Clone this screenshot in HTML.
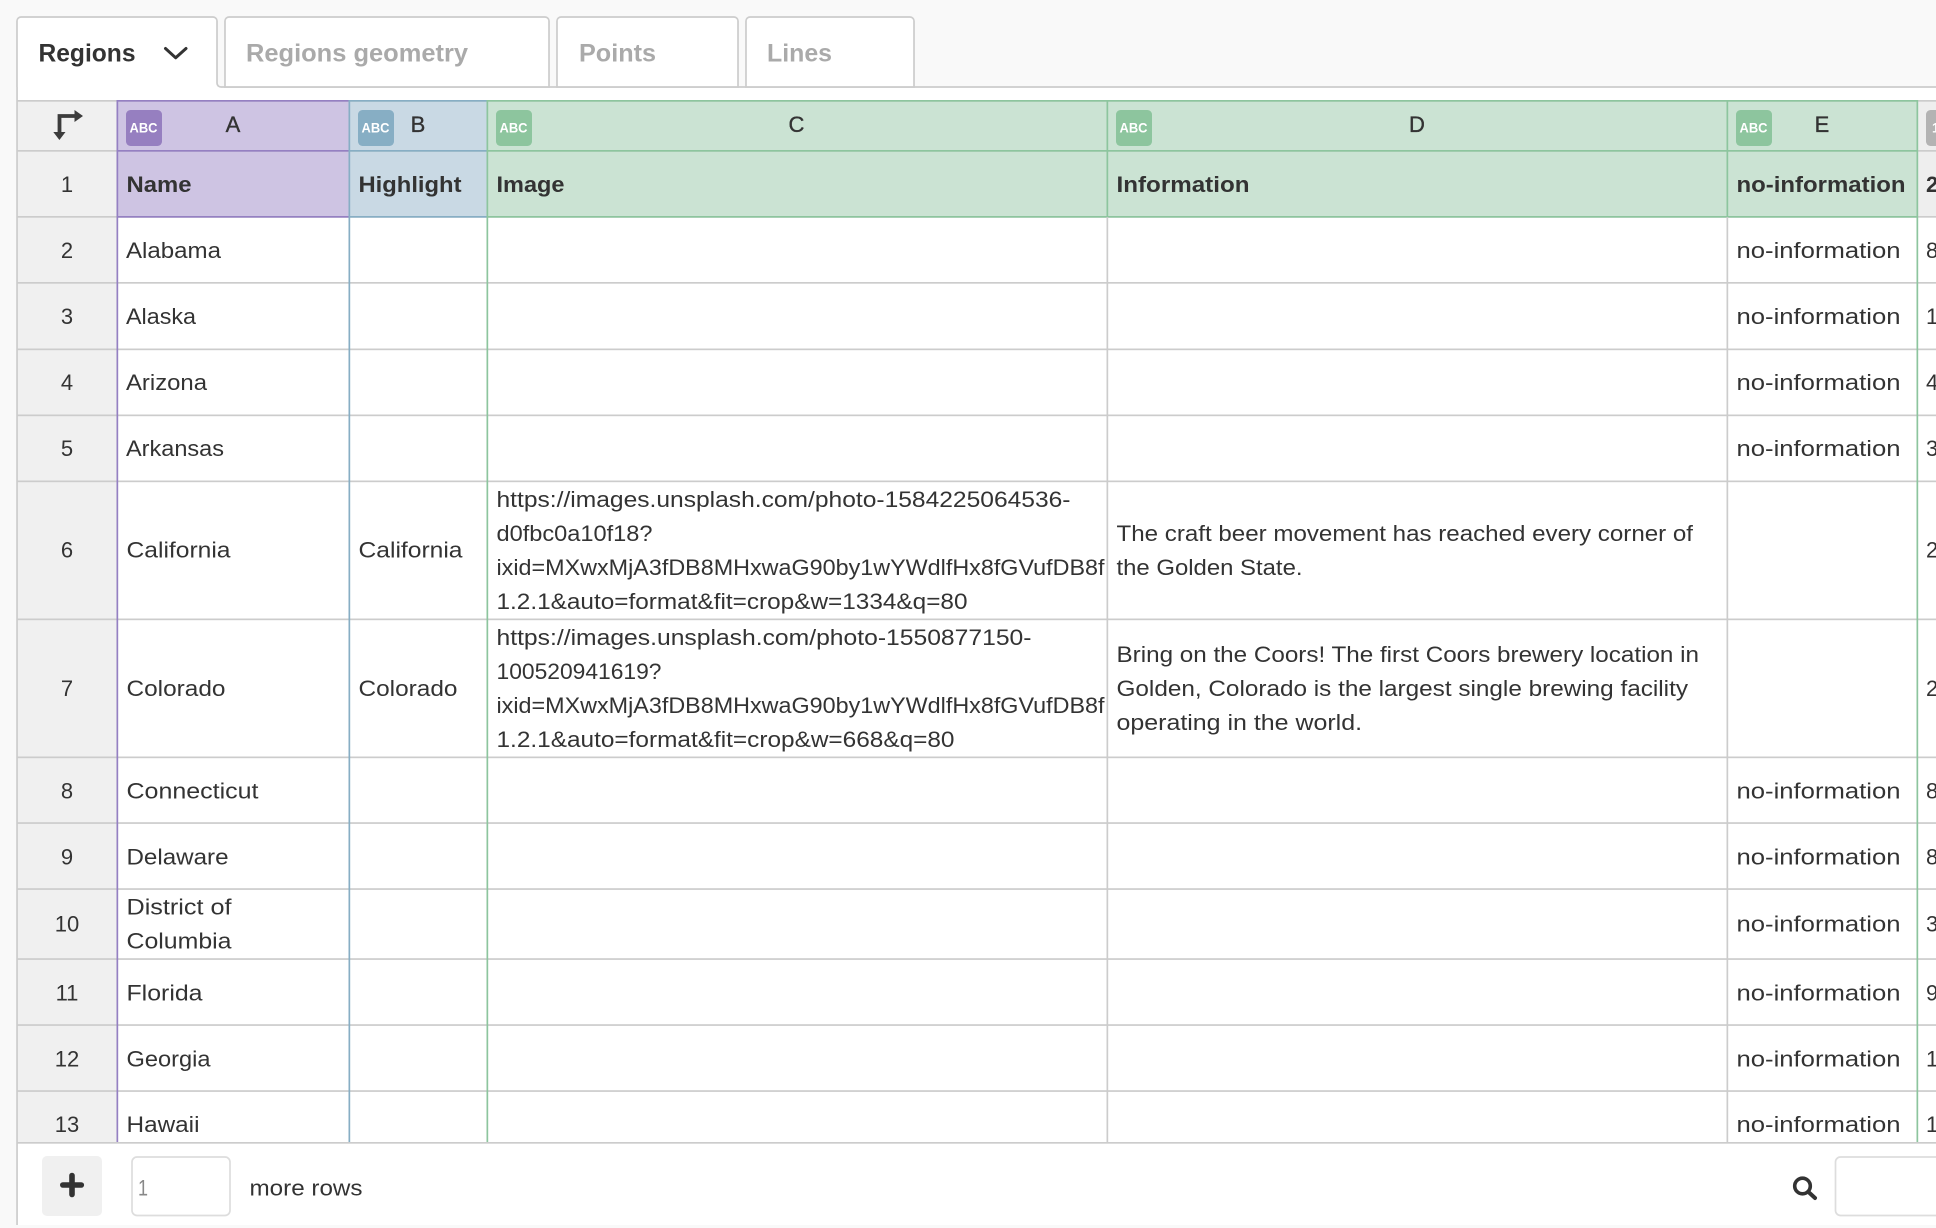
<!DOCTYPE html>
<html><head><meta charset="utf-8"><title>Regions</title>
<style>
html,body{margin:0;padding:0;background:#f9f9f9;overflow:hidden;width:1936px;height:1228px}
svg{display:block}
text{font-family:"Liberation Sans",Arial,sans-serif;font-size:22px;fill:#333;transform:translateY(-.5px)}
.b{font-weight:700}
.n{text-anchor:middle}
.l{stroke:#333;stroke-width:.35px}
.abc{font-size:13.5px;font-weight:700;fill:#fff}
.tab{font-size:25px;font-weight:700}
.off{fill:#aaa}
</style></head><body>
<svg width="1936" height="1228" viewBox="0 0 1936 1228" xmlns="http://www.w3.org/2000/svg">
<rect width="1936" height="1228" fill="#f9f9f9"/>
<!-- main white panel -->
<rect x="17" y="87" width="1919" height="1138" fill="#fff"/>
<!-- tabs -->
<path d="M17 87V21a4 4 0 0 1 4-4H213a4 4 0 0 1 4 4V87Z" fill="#fff"/>
<path d="M17 87V21a4 4 0 0 1 4-4H213a4 4 0 0 1 4 4V83a4 4 0 0 0 4 4H1936" fill="none" stroke="#ccc" stroke-width="1.7"/>
<path d="M225 87V21a4 4 0 0 1 4-4H545a4 4 0 0 1 4 4V87Z" fill="#fff" stroke="#ccc" stroke-width="1.7"/>
<path d="M557 87V21a4 4 0 0 1 4-4H734a4 4 0 0 1 4 4V87Z" fill="#fff" stroke="#ccc" stroke-width="1.7"/>
<path d="M746 87V21a4 4 0 0 1 4-4H910a4 4 0 0 1 4 4V87Z" fill="#fff" stroke="#ccc" stroke-width="1.7"/>
<text class="tab" x="38.500" y="62" textLength="97" lengthAdjust="spacingAndGlyphs">Regions</text>
<path d="M165.500 48.500 175.700 57.800 186 48.500" fill="none" stroke="#333" stroke-width="3" stroke-linecap="round" stroke-linejoin="round"/>
<text class="tab off" x="246" y="62" textLength="222" lengthAdjust="spacingAndGlyphs">Regions geometry</text>
<text class="tab off" x="579" y="62" textLength="77" lengthAdjust="spacingAndGlyphs">Points</text>
<text class="tab off" x="767" y="62" textLength="65" lengthAdjust="spacingAndGlyphs">Lines</text>

<!-- header fills -->
<rect x="17" y="101" width="100" height="1042" fill="#f0f0f0"/>
<rect x="117" y="101" width="232" height="116" fill="#cec4e3"/>
<rect x="349" y="101" width="138" height="116" fill="#c9d9e4"/>
<rect x="487" y="101" width="1430" height="116" fill="#cbe3d3"/>
<rect x="1917" y="101" width="19" height="116" fill="#eee"/>

<!-- horizontal lines -->
<g fill="#ccc">
<rect x="17" y="100" width="1919" height="1.7"/>
<rect x="17" y="150" width="1919" height="1.7"/>
<rect x="17" y="216" width="1919" height="1.7"/>
<rect x="17" y="282" width="1919" height="1.7"/>
<rect x="17" y="348.500" width="1919" height="1.7"/>
<rect x="17" y="414.500" width="1919" height="1.7"/>
<rect x="17" y="480.500" width="1919" height="1.7"/>
<rect x="17" y="618.500" width="1919" height="1.7"/>
<rect x="17" y="756.500" width="1919" height="1.7"/>
<rect x="17" y="822.200" width="1919" height="1.7"/>
<rect x="17" y="888.200" width="1919" height="1.7"/>
<rect x="17" y="958.200" width="1919" height="1.7"/>
<rect x="17" y="1024.200" width="1919" height="1.7"/>
<rect x="17" y="1090.200" width="1919" height="1.7"/>
<rect x="17" y="1142" width="1919" height="1.7"/>
</g>
<!-- coloured header lines -->
<rect x="117" y="100" width="232" height="1.7" fill="#9580c2"/>
<rect x="117" y="150" width="232" height="1.7" fill="#9580c2"/>
<rect x="117" y="216" width="232" height="1.7" fill="#9580c2"/>
<rect x="349" y="100" width="138" height="1.7" fill="#87aec4"/>
<rect x="349" y="150" width="138" height="1.7" fill="#87aec4"/>
<rect x="349" y="216" width="138" height="1.7" fill="#87aec4"/>
<rect x="487" y="100" width="1430" height="1.7" fill="#8dc59e"/>
<rect x="487" y="150" width="1430" height="1.7" fill="#8dc59e"/>
<rect x="487" y="216" width="1430" height="1.7" fill="#8dc59e"/>
<!-- vertical lines -->
<rect x="1106.500" y="217" width="1.7" height="925" fill="#ccc"/>
<rect x="1726.500" y="217" width="1.7" height="925" fill="#ccc"/>
<rect x="1106.500" y="100" width="1.7" height="117" fill="#8dc59e"/>
<rect x="1726.500" y="100" width="1.7" height="117" fill="#8dc59e"/>
<rect x="116.500" y="100" width="1.7" height="1042" fill="#9580c2"/>
<rect x="348.500" y="100" width="1.7" height="1042" fill="#87aec4"/>
<rect x="486.500" y="100" width="1.7" height="1042" fill="#8dc59e"/>
<rect x="1916.500" y="100" width="1.7" height="1042" fill="#8dc59e"/>
<!-- left edge -->
<rect x="16.200" y="87" width="1.7" height="1138" fill="#ccc"/>

<!-- corner icon -->
<path d="M59.500 133V116H75" fill="none" stroke="#3c3c3c" stroke-width="3.800"/>
<path d="M74.500 110 83 116 74.500 122ZM53.300 132H65.500L59.400 140Z" fill="#3c3c3c"/>

<!-- badges -->
<rect x="126" y="110" width="36" height="36" rx="4.500" fill="#967fc0"/>
<rect x="358" y="110" width="36" height="36" rx="4.500" fill="#87aec4"/>
<rect x="496" y="110" width="36" height="36" rx="4.500" fill="#8dc59e"/>
<rect x="1116" y="110" width="36" height="36" rx="4.500" fill="#8dc59e"/>
<rect x="1736" y="110" width="36" height="36" rx="4.500" fill="#8dc59e"/>
<rect x="1926" y="110" width="36" height="36" rx="4.500" fill="#b3b3b3"/>
<text class="abc" x="129.500" y="133" textLength="28" lengthAdjust="spacingAndGlyphs">ABC</text>
<text class="abc" x="361.500" y="133" textLength="28" lengthAdjust="spacingAndGlyphs">ABC</text>
<text class="abc" x="499.500" y="133" textLength="28" lengthAdjust="spacingAndGlyphs">ABC</text>
<text class="abc" x="1119.500" y="133" textLength="28" lengthAdjust="spacingAndGlyphs">ABC</text>
<text class="abc" x="1739.500" y="133" textLength="28" lengthAdjust="spacingAndGlyphs">ABC</text>
<text class="abc" x="1932" y="133">1</text>

<!-- column letters -->
<text class="n l" x="233" y="132.500">A</text>
<text class="n l" x="418" y="132.500">B</text>
<text class="n l" x="796.500" y="132.500">C</text>
<text class="n l" x="1417" y="132.500">D</text>
<text class="n l" x="1822" y="132.500">E</text>

<!-- row numbers -->
<text class="n" x="67" y="192.500">1</text>
<text class="n" x="67" y="258.500">2</text>
<text class="n" x="67" y="324.500">3</text>
<text class="n" x="67" y="390.500">4</text>
<text class="n" x="67" y="456.500">5</text>
<text class="n" x="67" y="558">6</text>
<text class="n" x="67" y="696.500">7</text>
<text class="n" x="67" y="799">8</text>
<text class="n" x="67" y="865">9</text>
<text class="n" x="67" y="932">10</text>
<text class="n" x="67" y="1001">11</text>
<text class="n" x="67" y="1067">12</text>
<text class="n" x="67" y="1132.500">13</text>

<!-- header titles -->
<text class="b" x="126.500" y="192.500" textLength="65" lengthAdjust="spacingAndGlyphs">Name</text>
<text class="b" x="358.500" y="192.500" textLength="103" lengthAdjust="spacingAndGlyphs">Highlight</text>
<text class="b" x="496.500" y="192.500" textLength="68" lengthAdjust="spacingAndGlyphs">Image</text>
<text class="b" x="1116.500" y="192.500" textLength="133" lengthAdjust="spacingAndGlyphs">Information</text>
<text class="b" x="1736.500" y="192.500" textLength="169" lengthAdjust="spacingAndGlyphs">no-information</text>
<text class="b" x="1926" y="192.500">2</text>

<!-- column A -->
<text x="126" y="258.500" textLength="95" lengthAdjust="spacingAndGlyphs">Alabama</text>
<text x="126" y="324.500" textLength="70" lengthAdjust="spacingAndGlyphs">Alaska</text>
<text x="126" y="390.500" textLength="81" lengthAdjust="spacingAndGlyphs">Arizona</text>
<text x="126" y="456.500" textLength="98" lengthAdjust="spacingAndGlyphs">Arkansas</text>
<text x="126.500" y="558" textLength="104" lengthAdjust="spacingAndGlyphs">California</text>
<text x="126.500" y="696.500" textLength="99" lengthAdjust="spacingAndGlyphs">Colorado</text>
<text x="126.500" y="799" textLength="132" lengthAdjust="spacingAndGlyphs">Connecticut</text>
<text x="126.500" y="865" textLength="102" lengthAdjust="spacingAndGlyphs">Delaware</text>
<text x="126.500" y="915" textLength="105" lengthAdjust="spacingAndGlyphs">District of</text>
<text x="126.500" y="949" textLength="105" lengthAdjust="spacingAndGlyphs">Columbia</text>
<text x="126.500" y="1001" textLength="76" lengthAdjust="spacingAndGlyphs">Florida</text>
<text x="126.500" y="1067" textLength="84" lengthAdjust="spacingAndGlyphs">Georgia</text>
<text x="126.500" y="1132.500" textLength="73" lengthAdjust="spacingAndGlyphs">Hawaii</text>

<!-- column B -->
<text x="358.500" y="558" textLength="104" lengthAdjust="spacingAndGlyphs">California</text>
<text x="358.500" y="696.500" textLength="99" lengthAdjust="spacingAndGlyphs">Colorado</text>

<!-- column C -->
<text x="496.500" y="507.500" textLength="574" lengthAdjust="spacingAndGlyphs">https://images.unsplash.com/photo-1584225064536-</text>
<text x="496.500" y="541.500" textLength="156" lengthAdjust="spacingAndGlyphs">d0fbc0a10f18?</text>
<text x="496.500" y="575.500" textLength="608" lengthAdjust="spacingAndGlyphs">ixid=MXwxMjA3fDB8MHxwaG90by1wYWdlfHx8fGVufDB8f</text>
<text x="496.500" y="609.500" textLength="471" lengthAdjust="spacingAndGlyphs">1.2.1&amp;auto=format&amp;fit=crop&amp;w=1334&amp;q=80</text>
<text x="496.500" y="645.500" textLength="535" lengthAdjust="spacingAndGlyphs">https://images.unsplash.com/photo-1550877150-</text>
<text x="496.500" y="679.500" textLength="165" lengthAdjust="spacingAndGlyphs">100520941619?</text>
<text x="496.500" y="713.500" textLength="608" lengthAdjust="spacingAndGlyphs">ixid=MXwxMjA3fDB8MHxwaG90by1wYWdlfHx8fGVufDB8f</text>
<text x="496.500" y="747.500" textLength="458" lengthAdjust="spacingAndGlyphs">1.2.1&amp;auto=format&amp;fit=crop&amp;w=668&amp;q=80</text>

<!-- column D -->
<text x="1116.500" y="541.500" textLength="576.500" lengthAdjust="spacingAndGlyphs">The craft beer movement has reached every corner of</text>
<text x="1116.500" y="575.500" textLength="186" lengthAdjust="spacingAndGlyphs">the Golden State.</text>
<text x="1116.500" y="662.500" textLength="582.500" lengthAdjust="spacingAndGlyphs">Bring on the Coors! The first Coors brewery location in</text>
<text x="1116.500" y="696.500" textLength="571.500" lengthAdjust="spacingAndGlyphs">Golden, Colorado is the largest single brewing facility</text>
<text x="1116.500" y="730.500" textLength="245.500" lengthAdjust="spacingAndGlyphs">operating in the world.</text>

<!-- column E -->
<text x="1736.500" y="258.500" textLength="164" lengthAdjust="spacingAndGlyphs">no-information</text>
<text x="1736.500" y="324.500" textLength="164" lengthAdjust="spacingAndGlyphs">no-information</text>
<text x="1736.500" y="390.500" textLength="164" lengthAdjust="spacingAndGlyphs">no-information</text>
<text x="1736.500" y="456.500" textLength="164" lengthAdjust="spacingAndGlyphs">no-information</text>
<text x="1736.500" y="799" textLength="164" lengthAdjust="spacingAndGlyphs">no-information</text>
<text x="1736.500" y="865" textLength="164" lengthAdjust="spacingAndGlyphs">no-information</text>
<text x="1736.500" y="932" textLength="164" lengthAdjust="spacingAndGlyphs">no-information</text>
<text x="1736.500" y="1001" textLength="164" lengthAdjust="spacingAndGlyphs">no-information</text>
<text x="1736.500" y="1067" textLength="164" lengthAdjust="spacingAndGlyphs">no-information</text>
<text x="1736.500" y="1132.500" textLength="164" lengthAdjust="spacingAndGlyphs">no-information</text>

<!-- column F -->
<text x="1926" y="258.500">8</text>
<text x="1926" y="324.500">1</text>
<text x="1926" y="390.500">4</text>
<text x="1926" y="456.500">3</text>
<text x="1926" y="558">2</text>
<text x="1926" y="696.500">2</text>
<text x="1926" y="799">8</text>
<text x="1926" y="865">8</text>
<text x="1926" y="932">3</text>
<text x="1926" y="1001">9</text>
<text x="1926" y="1067">1</text>
<text x="1926" y="1132.500">1</text>

<!-- footer -->
<rect x="18" y="1143" width="1918" height="82" fill="#fff"/>
<rect x="17" y="1142" width="1919" height="1.7" fill="#ccc"/>
<rect x="42" y="1156" width="60" height="60" rx="5" fill="#f0f0f0"/>
<path d="M62.800 1185H81.300M72 1175.500V1194.500" stroke="#333" stroke-width="5.600" stroke-linecap="round"/>
<rect x="132" y="1157" width="98" height="58.500" rx="5" fill="#fff" stroke="#ddd" stroke-width="1.700"/>
<text x="138" y="1196" style="fill:#888" textLength="10" lengthAdjust="spacingAndGlyphs">1</text>
<text x="249.500" y="1196" textLength="113" lengthAdjust="spacingAndGlyphs">more rows</text>
<circle cx="1802.500" cy="1186" r="7.800" fill="none" stroke="#333" stroke-width="3.600"/>
<path d="M1808.500 1192 1815 1198" stroke="#333" stroke-width="4" stroke-linecap="round"/>
<rect x="1835.500" y="1157" width="140" height="58.500" rx="5" fill="#fff" stroke="#ddd" stroke-width="1.700"/>
</svg>
</body></html>
